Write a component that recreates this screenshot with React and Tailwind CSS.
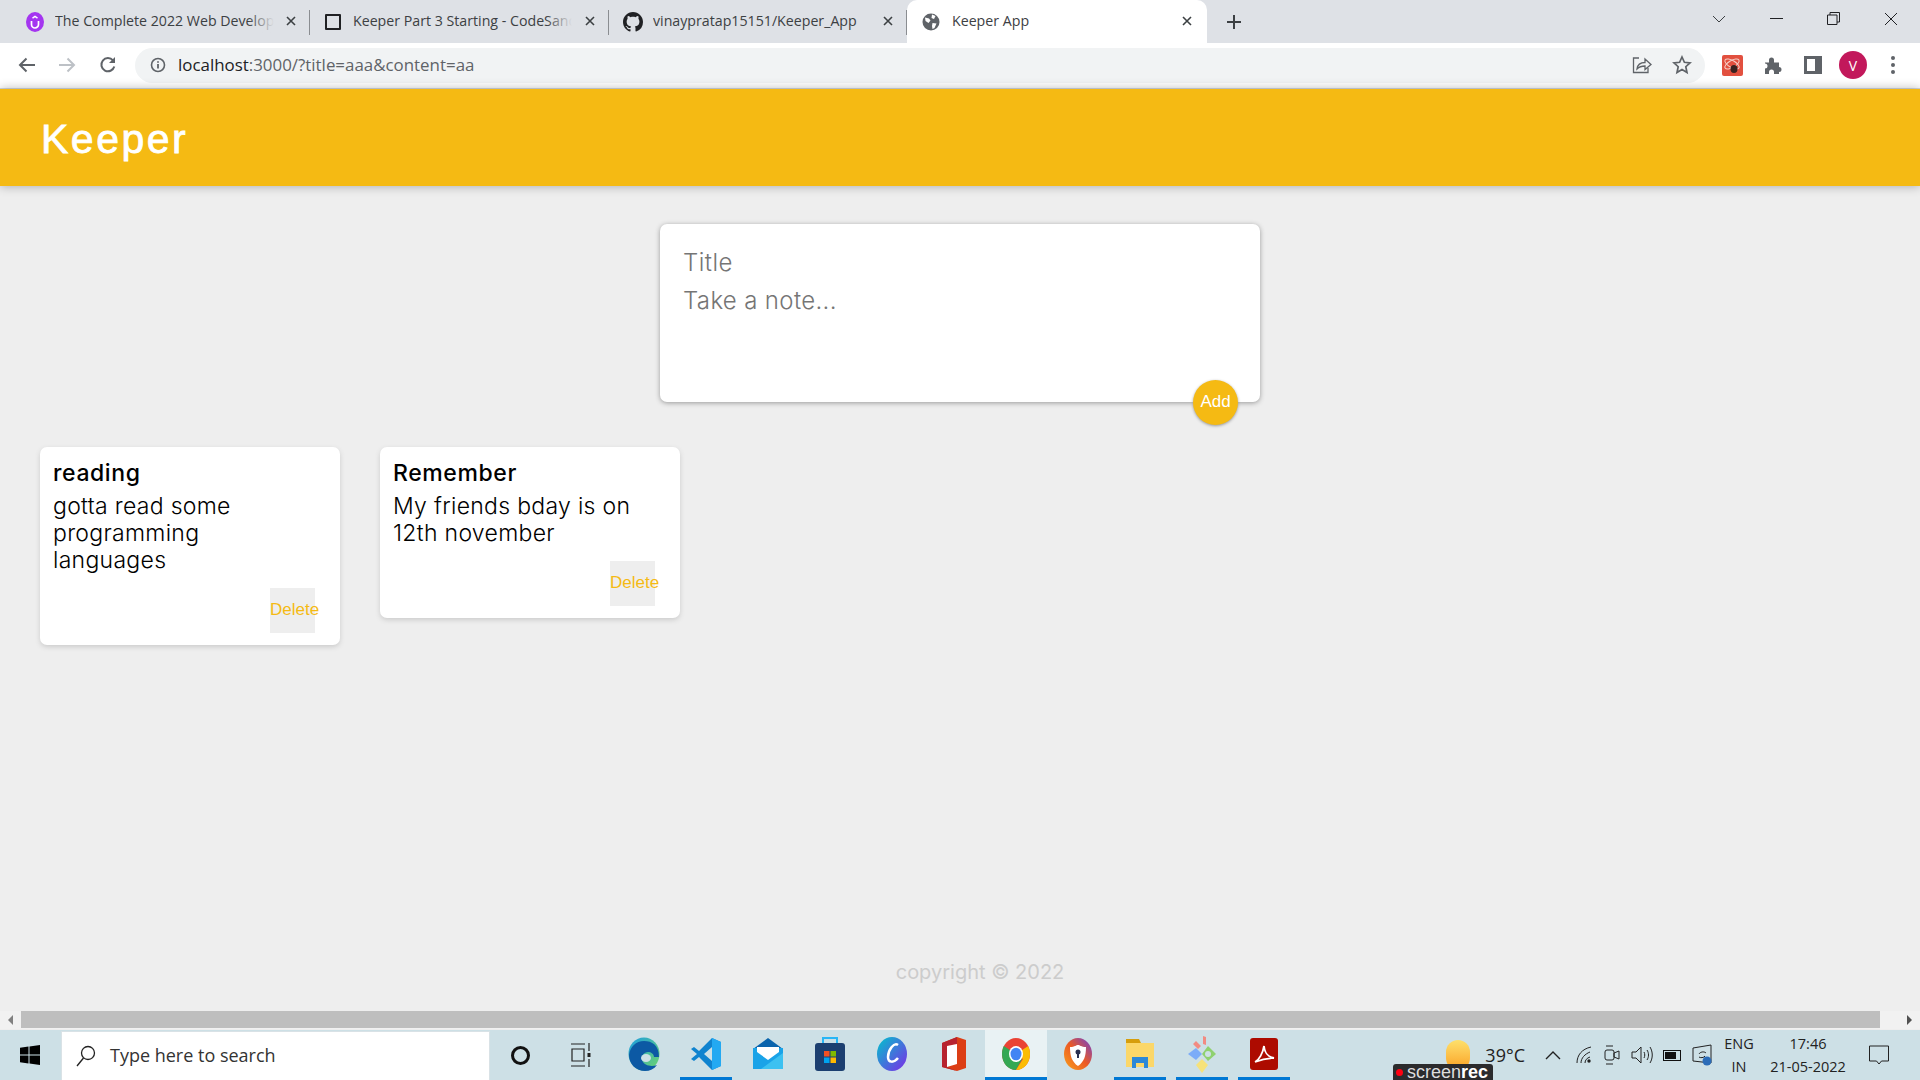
import { useState } from 'react';

const uiFont = 'font-["Open_Sans","Noto_Sans",sans-serif]';
const noteFont = 'font-["Inter","Noto_Sans",sans-serif]';

function CloseIcon() {
  return (
    <svg width="10" height="10" viewBox="0 0 10 10" className="shrink-0">
      <path d="M1 1l8 8M9 1l-8 8" stroke="#3c4043" strokeWidth="1.6" fill="none" />
    </svg>
  );
}

function UdemyIcon() {
  return (
    <svg width="18" height="20" viewBox="0 0 18 20">
      <ellipse cx="9" cy="10" rx="9" ry="10" fill="#a435f0" />
      <path d="M5.5 9v3.5a3.5 3.5 0 0 0 7 0V9" stroke="#fff" strokeWidth="1.7" fill="none" />
      <path d="M6.5 6.2L9 4.5l2.5 1.7" stroke="#fff" strokeWidth="1.5" fill="none" />
    </svg>
  );
}

function SquareIcon() {
  return <div className="w-[16px] h-[16px] border-2 border-[#202124] rounded-[1px]" />;
}

function GithubIcon() {
  return (
    <svg width="20" height="20" viewBox="0 0 16 16" fill="#202124">
      <path d="M8 0C3.58 0 0 3.58 0 8c0 3.54 2.29 6.53 5.47 7.59.4.07.55-.17.55-.38 0-.19-.01-.82-.01-1.49-2.01.37-2.53-.49-2.69-.94-.09-.23-.48-.94-.82-1.13-.28-.15-.68-.52-.01-.53.63-.01 1.08.58 1.23.82.72 1.21 1.87.87 2.33.66.07-.52.28-.87.51-1.07-1.78-.2-3.64-.89-3.64-3.95 0-.87.31-1.59.82-2.15-.08-.2-.36-1.02.08-2.12 0 0 .67-.21 2.2.82.64-.18 1.32-.27 2-.27s1.36.09 2 .27c1.53-1.04 2.2-.82 2.2-.82.44 1.1.16 1.92.08 2.12.51.56.82 1.27.82 2.15 0 3.07-1.87 3.75-3.65 3.95.29.25.54.73.54 1.48 0 1.07-.01 1.93-.01 2.2 0 .21.15.46.55.38A8.01 8.01 0 0 0 16 8c0-4.42-3.58-8-8-8z" />
    </svg>
  );
}

function GlobeIcon() {
  return (
    <svg width="18" height="18" viewBox="0 0 18 18">
      <circle cx="9" cy="9" r="8.5" fill="#5f6368" />
      <path d="M3 4.5l4 1 1.5 2L6.500 10 3.500 8zM10 1.500l3.500 1.500-1.500 3-2.500-1zM10.500 10l4 .5-2 4.500-2 1-.5-3z" fill="#fff" />
    </svg>
  );
}

function Tab({ icon, title, fade, width, iconMargin }) {
  return (
    <div className={`${width} h-[43px] flex items-center relative shrink-0`}>
      <div className={`w-[20px] ${iconMargin} flex justify-center shrink-0`}>{icon}</div>
      <div className="relative w-[219px] ml-[10px] pb-px overflow-hidden whitespace-nowrap text-[14.200px] text-[#3c4043]">
        {title}
        {fade && <div className="absolute right-0 top-0 bottom-0 w-[26px] bg-gradient-to-r from-transparent to-[#dee1e6]" />}
      </div>
      <div className="absolute right-[14px] top-[16px]"><CloseIcon /></div>
      <div className="absolute right-0 top-[10px] h-[25px] w-px bg-[#8a8d91]" />
    </div>
  );
}

function TabStrip() {
  return (
    <div className={`h-[43px] bg-[#dee1e6] flex items-center pl-[17px] relative ${uiFont}`}>
      <Tab width="w-[293px]" iconMargin="ml-[8px]" icon={<UdemyIcon />} title="The Complete 2022 Web Developer" fade />
      <Tab width="w-[299px]" iconMargin="ml-[13px]" icon={<SquareIcon />} title="Keeper Part 3 Starting - CodeSandbox" fade />
      <Tab width="w-[298px]" iconMargin="ml-[14px]" icon={<GithubIcon />} title="vinaypratap15151/Keeper_App" />
      <div className="w-[300px] h-[43px] bg-white rounded-t-[10px] flex items-center relative shrink-0">
        <div className="ml-[15px]"><GlobeIcon /></div>
        <span className="ml-[12px] pb-px text-[14.200px] text-[#3c4043]">Keeper App</span>
        <div className="absolute right-[15px] top-[16px]"><CloseIcon /></div>
      </div>
      <svg width="16" height="16" viewBox="0 0 16 16" className="ml-[19px] shrink-0">
        <path d="M8 1v14M1 8h14" stroke="#3c4043" strokeWidth="2" />
      </svg>
      <div className="ml-auto flex items-center h-full pb-[6px]">
        <svg width="14" height="8" viewBox="0 0 14 8" className="mr-[44px]"><path d="M1 1l6 6 6-6" stroke="#3c4043" fill="none" /></svg>
        <div className="w-[13px] h-px bg-[#202124] mr-[44px]" />
        <svg width="13" height="13" viewBox="0 0 13 13" className="mr-[44px]">
          <path d="M.5 3h9.500v9.500H.5zM3 3V.5h9.500V10H10" stroke="#202124" fill="none" />
        </svg>
        <svg width="14" height="14" viewBox="0 0 14 14" className="mr-[22px]"><path d="M1 1l12 12M13 1L1 13" stroke="#202124" fill="none" /></svg>
      </div>
    </div>
  );
}

function Toolbar() {
  return (
    <div className={`h-[46px] bg-white border-b border-[#d5dae0] flex items-center pl-[17px] pb-px ${uiFont}`}>
      <svg width="20" height="20" viewBox="0 0 20 20" className="shrink-0">
        <path d="M18 10H3M9.500 3.500L3 10l6.500 6.500" stroke="#5f6368" strokeWidth="2" fill="none" />
      </svg>
      <svg width="20" height="20" viewBox="0 0 20 20" className="ml-[20px] shrink-0">
        <path d="M2 10h15M10.500 3.500L17 10l-6.500 6.500" stroke="#bdc1c6" strokeWidth="2" fill="none" />
      </svg>
      <svg width="20" height="20" viewBox="0 0 20 20" className="ml-[21px] shrink-0">
        <path d="M16.300 11.500A6.600 6.600 0 1 1 15 5.400" stroke="#5f6368" strokeWidth="2" fill="none" />
        <path d="M17 2v6h-6z" fill="#5f6368" />
      </svg>
      <div className="ml-[17px] w-[1570px] h-[35px] rounded-full bg-[#f1f3f4] flex items-center pl-[15px] shrink-0">
        <svg width="16" height="16" viewBox="0 0 16 16">
          <circle cx="8" cy="8" r="6.500" stroke="#5f6368" strokeWidth="1.600" fill="none" />
          <path d="M8 7v4.500M8 4.200v1.600" stroke="#5f6368" strokeWidth="1.800" />
        </svg>
        <div className="ml-[12px] text-[16.900px] text-[#5f6368] whitespace-nowrap">
          <span className="text-[#202124]">localhost</span>:3000/?title=aaa&amp;content=aa
        </div>
        <svg width="20" height="18" viewBox="0 0 20 18" className="ml-auto">
          <path d="M7 2H1.500v14.500H16V12" stroke="#5f6368" strokeWidth="1.300" fill="none" />
          <path d="M5 13c.5-4 3.500-6.500 8-6.500V3l6 5.500-6 5V10c-3.500 0-6 1-8 3z" stroke="#5f6368" strokeWidth="1.300" fill="none" />
        </svg>
        <svg width="20" height="20" viewBox="0 0 20 20" className="ml-[20px] mr-[13px]">
          <path d="M10 2l2.400 5.300 5.600.600-4.200 3.800 1.200 5.800L10 14.600l-5 2.900 1.200-5.800L2 7.900l5.600-.600z" stroke="#5f6368" strokeWidth="1.700" fill="none" />
        </svg>
      </div>
      {/* extension with the bug logo */}
      <svg width="21" height="21" viewBox="0 0 21 21" className="ml-[17px] shrink-0">
        <rect width="21" height="21" rx="2" fill="#e2503f" />
        <ellipse cx="10" cy="9" rx="8" ry="3.500" stroke="#f6d0c8" fill="none" transform="rotate(30 10 9)" />
        <ellipse cx="10" cy="9" rx="8" ry="3.500" stroke="#f6d0c8" fill="none" transform="rotate(-30 10 9)" />
        <ellipse cx="12" cy="14" rx="3.500" ry="4" fill="#3a2320" />
      </svg>
      <svg width="20" height="20" viewBox="0 0 20 20" className="ml-[21px] shrink-0">
        <path d="M1 7.500h4V5a2.500 2.500 0 0 1 5 0v2.500h5v4.500a2.500 2.500 0 0 1 0 5v2H10v-2a2.500 2.500 0 0 0-5 0v2H1v-5.500a2.500 2.500 0 0 0 0-5z" fill="#5f6368" />
      </svg>
      <div className="ml-[20px] w-[18px] h-[18px] border-[3px] border-[#5f6368] border-r-[7px] shrink-0" />
      <div className="ml-[17px] w-[28px] h-[28px] rounded-full bg-[#c2185b] text-white text-[14px] flex items-center justify-center shrink-0">V</div>
      <div className="ml-[24px] flex flex-col gap-[3px] shrink-0">
        <div className="w-[4px] h-[4px] rounded-full bg-[#5f6368]" />
        <div className="w-[4px] h-[4px] rounded-full bg-[#5f6368]" />
        <div className="w-[4px] h-[4px] rounded-full bg-[#5f6368]" />
      </div>
    </div>
  );
}

function CreateArea() {
  const [note, setNote] = useState({ title: '', content: '' });
  return (
    <form className={`relative mx-auto mt-[38px] w-[600px] h-[178px] bg-white rounded-[7px] shadow-[0_1px_5px_#999] pt-[19px] px-[23px] shrink-0 ${noteFont}`}>
      <input
        value={note.title}
        onChange={(e) => setNote({ ...note, title: e.target.value })}
        placeholder="Title"
        className="block w-full h-[38px] text-[24px] tracking-[0.5px] font-light outline-none placeholder:text-[#757575]"
      />
      <textarea
        value={note.content}
        onChange={(e) => setNote({ ...note, content: e.target.value })}
        placeholder="Take a note..."
        className="block w-full h-[90px] mt-px text-[24px] tracking-[0.35px] font-light leading-[38px] outline-none resize-none placeholder:text-[#757575]"
      />
      <button
        type="button"
        className='absolute right-[22px] bottom-[-23px] w-[45px] h-[45px] pb-[2px] rounded-full bg-[#f5ba13] text-white text-[17px] font-["Liberation_Sans",sans-serif] shadow-[0_1px_3px_#999]'
      >
        Add
      </button>
    </form>
  );
}

function Note({ title, content }) {
  return (
    <div className={`w-[300px] bg-white rounded-[7px] shadow-[0_2px_5px_#ccc] pt-[12px] pl-[13px] pr-[25px] pb-[12px] text-black flex flex-col ${noteFont}`}>
      <h1 className="text-[23px] tracking-[0.6px] font-medium leading-[28px]">{title}</h1>
      <p className="mt-[6px] pr-[14px] text-[23px] tracking-[0.3px] font-light leading-[27px]">{content}</p>
      <button
        type="button"
        className='self-end mt-[14px] w-[45px] h-[45px] pb-[2px] bg-[#eeeeee] text-[#f5ba13] text-[17px] font-["Liberation_Sans",sans-serif] whitespace-nowrap flex items-center justify-start'
      >
        Delete
      </button>
    </div>
  );
}

function Scrollbar() {
  return (
    <div className="h-[18px] bg-[#f1f1f1] flex items-center shrink-0">
      <div className="w-[21px] flex justify-center shrink-0">
        <div className="w-0 h-0 border-y-[5px] border-y-transparent border-r-[5px] border-r-[#808080]" />
      </div>
      <div className="w-[1859px] h-[17px] bg-[#bebebe] self-start" />
      <div className="flex-1 flex justify-end pr-[8px]">
        <div className="w-0 h-0 border-y-[5px] border-y-transparent border-l-[5px] border-l-[#505050]" />
      </div>
    </div>
  );
}

const dockIcons = [
  {
    key: 'edge',
    svg: (
      <svg width="32" height="34" viewBox="0 0 32 34">
        <defs>
          <linearGradient id="edgeGrad" x1="0" y1="0" x2="1" y2="1">
            <stop offset="0" stopColor="#1b9de2" />
            <stop offset="1" stopColor="#6fd66b" />
          </linearGradient>
        </defs>
        <ellipse cx="16" cy="17" rx="15.500" ry="16.500" fill="url(#edgeGrad)" />
        <path d="M1 18c0 9 7 16 16 16 5 0 9-2 12-6-5 2-13 1-15-5-1-4 2-8 6-8 3 0 6 2 6 5h5C31 8 24 4 16 4 8 4 2 10 1 18z" fill="#0c59a4" />
        <ellipse cx="18" cy="21" rx="5" ry="4" fill="#cde0e6" />
      </svg>
    ),
  },
  {
    key: 'vscode',
    active: true,
    svg: (
      <svg width="30" height="34" viewBox="0 0 30 34">
        <path d="M21 1l9 4v24l-9 4-13-13-5 4-3-2 6-5-6-5 3-2 5 4z" fill="#0f83cf" />
        <path d="M21 1l9 4v24l-9 4z" fill="#23a9f2" />
        <path d="M21 10l-8 7 8 7z" fill="#cde0e6" />
      </svg>
    ),
  },
  {
    key: 'mail',
    svg: (
      <svg width="30" height="32" viewBox="0 0 30 32">
        <path d="M15 0l15 11H0z" fill="#0a64ad" />
        <rect y="10" width="30" height="21" fill="#1aa3e8" />
        <path d="M4 9h22v5l-11 8-11-8z" fill="#fff" />
        <path d="M30 31H8l22-16z" fill="#3cc1f1" />
      </svg>
    ),
  },
  {
    key: 'store',
    svg: (
      <svg width="30" height="34" viewBox="0 0 30 34">
        <path d="M8 6V1h14v5" stroke="#29b6f6" strokeWidth="2" fill="none" />
        <rect y="6" width="30" height="28" rx="3" fill="#1c3f70" />
        <rect x="9" y="14" width="5.500" height="5.500" fill="#f25022" />
        <rect x="15.500" y="14" width="5.500" height="5.500" fill="#7fba00" />
        <rect x="9" y="20.500" width="5.500" height="5.500" fill="#00a4ef" />
        <rect x="15.500" y="20.500" width="5.500" height="5.500" fill="#ffb900" />
      </svg>
    ),
  },
  {
    key: 'canva',
    svg: (
      <svg width="30" height="34" viewBox="0 0 30 34">
        <defs>
          <linearGradient id="canvaGrad" x1="0" y1="0" x2="1" y2="1">
            <stop offset="0" stopColor="#00c4cc" />
            <stop offset="1" stopColor="#7d2ae8" />
          </linearGradient>
        </defs>
        <ellipse cx="15" cy="17" rx="15" ry="17" fill="url(#canvaGrad)" />
        <path d="M21 8c-4-3-10 5-10 12 0 6 6 6 10 1" stroke="#fff" strokeWidth="2.500" fill="none" />
      </svg>
    ),
  },
  {
    key: 'office',
    svg: (
      <svg width="24" height="34" viewBox="0 0 24 34">
        <path d="M15 0l9 3v28l-9 3-15-4V6z" fill="#dc3e15" />
        <path d="M15 0L0 6v24l15 4-10-4V9l10-2z" fill="#b7232f" />
        <path d="M5 9l10-2v20l-10 3z" fill="#fff" />
      </svg>
    ),
  },
  {
    key: 'chrome',
    active: true,
    full: true,
    svg: (
      <svg width="28" height="32" viewBox="0 0 28 32">
        <ellipse cx="14" cy="16" rx="14" ry="16" fill="#ea4335" />
        <path d="M14 16L1.800 8C0.500 11 0 13 0 16c0 9 6 16 14 16l6-11z" fill="#34a853" />
        <path d="M14 16l12.200-8c1.200 2.500 1.800 5 1.800 8 0 9-6 16-14 16l7-11z" fill="#fbbc05" />
        <ellipse cx="14" cy="16" rx="7" ry="8" fill="#fff" />
        <ellipse cx="14" cy="16" rx="5.500" ry="6.300" fill="#4285f4" />
      </svg>
    ),
  },
  {
    key: 'avast',
    svg: (
      <svg width="28" height="32" viewBox="0 0 28 32">
        <defs>
          <linearGradient id="avastGrad" x1="0" y1="1" x2="1" y2="0">
            <stop offset="0" stopColor="#f9a11b" />
            <stop offset="0.5" stopColor="#ec5a24" />
            <stop offset="1" stopColor="#6b3fd6" />
          </linearGradient>
        </defs>
        <ellipse cx="14" cy="16" rx="14" ry="16" fill="url(#avastGrad)" />
        <path d="M6 9c5 0 6-2 8-2s3 2 8 2c0 9-2 15-8 19-6-4-8-10-8-19z" fill="#fff" />
        <circle cx="14" cy="14" r="2.500" fill="#2a2f4f" />
        <path d="M13 15h2v5h-2z" fill="#2a2f4f" />
      </svg>
    ),
  },
  {
    key: 'explorer',
    active: true,
    svg: (
      <svg width="28" height="30" viewBox="0 0 28 30">
        <path d="M0 0h13l2 4H0z" fill="#d69e0c" />
        <rect y="4" width="28" height="24" fill="#fbd769" />
        <path d="M6 29V18h16v11h-4v-5h-8v5z" fill="#2b88d8" />
      </svg>
    ),
  },
  {
    key: 'git',
    active: true,
    svg: (
      <svg width="30" height="38" viewBox="0 0 30 38">
        <path d="M9 13l6 6-6 6-8-6z" fill="#7cacf8" />
        <path d="M21 11l8 8-8 7-6-7z" fill="#8fd16f" />
        <path d="M15 24l6 6-6 8-6-8z" fill="#f6e27a" />
        <path d="M9 6l5 5-3 3-5-5zM16 1l3 1v8l-3-1z" fill="#f28b82" />
        <circle cx="21" cy="19" r="3" fill="#cde0e6" />
      </svg>
    ),
  },
  {
    key: 'acrobat',
    active: true,
    svg: (
      <svg width="28" height="32" viewBox="0 0 28 32">
        <rect width="28" height="32" rx="3" fill="#ad0b00" />
        <path d="M5 24c4-2 8-9 9-16 1 8 4 11 10 12-6 0-12 1-19 4z" stroke="#fff" strokeWidth="1.800" fill="none" />
      </svg>
    ),
  },
];

function Taskbar() {
  return (
    <div className={`relative h-[50px] mt-px bg-[#cde0e6] flex items-center shrink-0 ${uiFont}`}>
      <svg width="20" height="20" viewBox="0 0 20 20" className="ml-[20px] shrink-0">
        <path d="M0 2.800l8.500-1.200v8H0zM9.500 1.400L20 0v9.600H9.500zM0 10.500h8.500v8L0 17.300zM9.500 10.500H20V20L9.500 18.600z" fill="#000" />
      </svg>
      <div className="ml-[21px] w-[429px] h-[49px] bg-white flex items-center shrink-0 border border-[#d9e2e6] border-b-0">
        <svg width="20" height="22" viewBox="0 0 20 22" className="ml-[14px]">
          <circle cx="12" cy="8" r="6.500" stroke="#222" strokeWidth="1.300" fill="none" />
          <path d="M7.500 13L1 21" stroke="#222" strokeWidth="1.300" />
        </svg>
        <span className="ml-[14px] text-[18px] text-[#333]">Type here to search</span>
      </div>
      <div className="ml-[21px] w-[19px] h-[19px] rounded-full border-[3px] border-[#111] shrink-0" />
      <svg width="20" height="24" viewBox="0 0 20 24" className="ml-[41px] shrink-0">
        <path d="M0 1h14M0 23h14M1 6h12v12H1zM18 0v8M18 16v8" stroke="#222" strokeWidth="1.200" fill="none" />
        <rect x="16.500" y="10" width="3" height="4" fill="#222" />
      </svg>
      <div className="ml-[22px] flex h-full shrink-0">
        {dockIcons.map((icon) => (
          <div key={icon.key} className={`relative w-[62px] h-full flex items-center justify-center pb-[3px] ${icon.full ? 'bg-[#e9f2f4]' : ''}`}>
            {icon.svg}
            {icon.active && (
              <div className={`absolute bottom-0 h-[3px] bg-[#0078d4] ${icon.full ? 'inset-x-0' : 'inset-x-[5px]'}`} />
            )}
          </div>
        ))}
      </div>
      <div className="ml-auto flex items-center h-full text-[#222] shrink-0">
        <div className="w-[24px] h-[30px] rounded-full bg-gradient-to-b from-[#fde06b] to-[#f9a11b]" />
        <span className="ml-[15px] text-[18px]">39°C</span>
        <svg width="16" height="10" viewBox="0 0 16 10" className="ml-[20px]"><path d="M1 9l7-7 7 7" stroke="#222" strokeWidth="1.400" fill="none" /></svg>
        <svg width="16" height="18" viewBox="0 0 16 18" className="ml-[15px]">
          <path d="M1 17C1 9 6 3 15 1M5 17c0-5 4-9 9-11M9 17c0-3 2-5 5-6" stroke="#222" fill="none" />
          <circle cx="13" cy="15" r="1.700" fill="#222" />
        </svg>
        <svg width="16" height="22" viewBox="0 0 16 22" className="ml-[12px]">
          <rect x="1" y="6" width="9" height="10" rx="2" stroke="#222" fill="none" />
          <path d="M10 9l5-2v8l-5-2zM2 2h7M2 20h7" stroke="#222" fill="none" />
        </svg>
        <svg width="22" height="20" viewBox="0 0 22 20" className="ml-[11px]">
          <path d="M1 7h4l5-5v16l-5-5H1zM13 7c1 2 1 4 0 6M16 5c2 3 2 7 0 10M19 2c3 5 3 11 0 16" stroke="#222" fill="none" />
        </svg>
        <div className="ml-[10px] w-[18px] h-[11px] border border-[#111] p-px relative">
          <div className="w-[11px] h-full bg-[#111]" />
        </div>
        <svg width="20" height="22" viewBox="0 0 20 22" className="ml-[11px]">
          <path d="M1 4l18-3v18l-18-2z" stroke="#222" fill="none" />
          <path d="M7 10c1-2 5-3 7-1M13 12c-1 2-5 2-6 1" stroke="#222" fill="none" />
          <circle cx="15" cy="17" r="4.500" fill="#2b6cb8" />
        </svg>
        <div className="ml-[9px] w-[36px] text-center text-[14.500px] leading-[23px]">
          <div>ENG</div>
          <div>IN</div>
        </div>
        <div className="ml-[10px] w-[82px] text-center text-[14.500px] leading-[23px]">
          <div>17:46</div>
          <div>21-05-2022</div>
        </div>
        <svg width="20" height="20" viewBox="0 0 20 20" className="ml-[20px] mr-[31px]">
          <path d="M.5 1h19v15h-7l-2.500 3-2.500-3h-7z" stroke="#222" fill="none" />
        </svg>
      </div>
      <div className='absolute left-[1393px] bottom-0 w-[100px] h-[16px] rounded-t-[3px] bg-[#2b2b2d] flex items-center pl-[3px] text-white text-[18px] leading-[16px] font-["Liberation_Sans",sans-serif]'>
        <div className="w-[7px] h-[7px] rounded-full bg-[#f01] mr-[4px] shrink-0" />
        <span className="text-[#ddd]">screen</span>
        <span className="font-bold">rec</span>
      </div>
    </div>
  );
}

export default function App() {
  return (
    <div className="w-[1920px] h-screen overflow-hidden flex flex-col bg-[#eeeeee]">
      <TabStrip />
      <Toolbar />
      <header className="relative z-10 h-[97px] bg-[#f5ba13] shadow-[0_0_10px_rgba(0,0,0,0.3)] flex items-center pl-[41px] shrink-0">
        <h1 className='text-[41px] text-white tracking-[2.500px] font-["Liberation_Sans",sans-serif] pt-[5px] [-webkit-text-stroke:0.8px_white]'>Keeper</h1>
      </header>
      <main className="flex-1 flex flex-col min-h-0">
        <CreateArea />
        <div className="flex items-start gap-[40px] pl-[40px] mt-[45px]">
          <Note title="reading" content="gotta read some programming languages" />
          <Note title="Remember" content="My friends bday is on 12th november" />
        </div>
        <footer className={`mt-auto pb-[25px] pl-[40px] text-center text-[20px] leading-[28px] text-[#cccccc] ${noteFont}`}>
          copyright © 2022
        </footer>
      </main>
      <Scrollbar />
      <Taskbar />
    </div>
  );
}
